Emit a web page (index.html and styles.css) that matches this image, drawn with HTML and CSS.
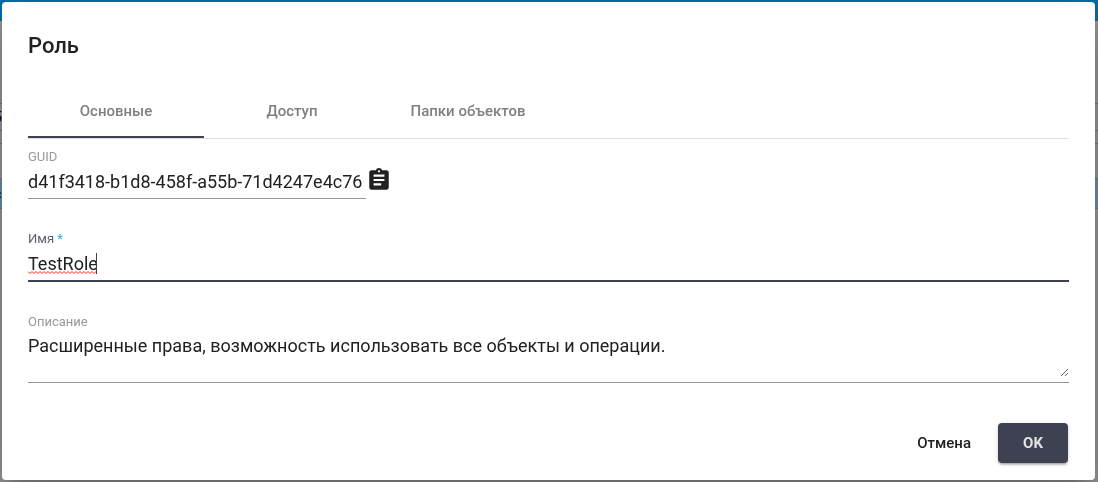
FILE: index.html
```html
<!DOCTYPE html>
<html lang="ru">
<head>
<meta charset="utf-8">
<meta name="viewport" content="width=device-width, initial-scale=1">
<title>Роль</title>
<link rel="stylesheet" href="styles.css">
</head>
<body>
<div class="page" aria-hidden="true">
  <div class="page-header"></div>
  <div class="page-filter"></div>
  <div class="page-search"><span class="page-text">5</span></div>
  <div class="page-gap"></div>
  <div class="page-row"></div>
  <div class="page-row page-row-selected"><span class="page-text">с</span></div>
  <div class="page-rest"></div>
</div>
<div class="overlay">
  <form class="dialog" role="dialog" aria-labelledby="dialog-title">
    <h1 class="title" id="dialog-title">Роль</h1>
    <div class="tabs" role="tablist">
      <button class="tab tab-active" type="button" role="tab" aria-selected="true">Основные</button>
      <button class="tab" type="button" role="tab" aria-selected="false">Доступ</button>
      <button class="tab" type="button" role="tab" aria-selected="false">Папки объектов</button>
    </div>
    <div class="fields">
      <div class="guid-row">
        <div class="field field-guid">
          <label class="label" for="guid">GUID</label>
          <input class="control" id="guid" type="text" value="d41f3418-b1d8-458f-a55b-71d4247e4c76" readonly>
        </div>
        <button class="copy" type="button" aria-label="Копировать">
          <svg class="copy-icon" viewBox="0 0 24 24"><path fill="currentColor" d="M19 3h-4.180C14.400 1.840 13.300 1 12 1c-1.300 0-2.400.840-2.820 2H5c-1.100 0-2 .900-2 2v14c0 1.100.900 2 2 2h14c1.100 0 2-.900 2-2V5c0-1.100-.900-2-2-2zm-7 0c.550 0 1 .450 1 1s-.450 1-1 1-1-.450-1-1 .450-1 1-1zm2 14H7v-2h7v2zm3-4H7v-2h10v2zm0-4H7V7h10v2z"/></svg>
        </button>
      </div>
      <div class="field field-focused">
        <label class="label" for="name">Имя <span class="required">*</span></label>
        <div class="control-wrap">
          <input class="control" id="name" type="text" value="TestRole" required spellcheck="false">
          <div class="typing" aria-hidden="true">
            <svg class="squiggle" viewBox="0 0 68 3"><path d="M0 .5 2 2.500 4 .5 6 2.500 8 .5 10 2.500 12 .5 14 2.500 16 .5 18 2.500 20 .5 22 2.500 24 .5 26 2.500 28 .5 30 2.500 32 .5 34 2.500 36 .5 38 2.500 40 .5 42 2.500 44 .5 46 2.500 48 .5 50 2.500 52 .5 54 2.500 56 .5 58 2.500 60 .5 62 2.500 64 .5 66 2.500 68 .5" fill="none" stroke="#f22" stroke-width="1"/></svg>
            <span class="caret"></span>
          </div>
        </div>
      </div>
      <div class="field">
        <label class="label" for="description">Описание</label>
        <textarea class="control control-area" id="description" spellcheck="false">Расширенные права, возможность использовать все объекты и операции.</textarea>
      </div>
    </div>
    <div class="actions">
      <button class="button" type="button">Отмена</button>
      <button class="button button-primary" type="submit">OK</button>
    </div>
  </form>
</div>
</body>
</html>
```
FILE: styles.css
```css
* {
  box-sizing: border-box;
}

html,
body {
  height: 100%;
}

body {
  margin: 0;
  overflow: hidden;
  background: #999;
  color: #212121;
  font-family: Roboto, "Noto Sans", sans-serif;
}

button,
input,
textarea {
  margin: 0;
  padding: 0;
  border: 0;
  border-radius: 0;
  outline: 0;
  background: none;
  color: inherit;
  font: inherit;
}

.page {
  display: flex;
  flex-direction: column;
  height: 100%;
  color: #000;
  font-size: 14px;
}

.page-header {
  height: 21px;
  background: #0071a8;
}

.page-filter {
  height: 83px;
  border-bottom: 1px solid #777;
}

.page-search {
  display: flex;
  align-items: center;
  height: 27px;
  border-bottom: 1px solid #777;
}

.page-gap {
  height: 13px;
  border-bottom: 1px solid #777;
}

.page-row {
  display: flex;
  align-items: center;
  height: 35px;
  border-bottom: 1px solid #777;
}

.page-row-selected {
  height: 30px;
  background: #6c91aa;
}

.page-text {
  margin-left: -6px;
}

.page-rest {
  flex: 1;
}

.overlay {
  position: fixed;
  inset: 0;
  padding: 2px 3px 2px 2px;
}

.dialog {
  display: flex;
  flex-direction: column;
  height: 100%;
  padding: 27px 26px 17px;
  border-radius: 4px;
  background: #fff;
  box-shadow: 0 12px 16px -8px rgba(0, 0, 0, 0.2), 0 26px 42px 3px rgba(0, 0, 0, 0.14), 0 10px 50px 9px rgba(0, 0, 0, 0.12);
}

.title {
  margin: 0 0 21px;
  font-size: 22px;
  font-weight: 500;
  line-height: 34px;
}

.tabs {
  display: flex;
  flex: none;
  height: 55px;
  border-bottom: 1px solid #e0e0e0;
}

.tab {
  min-width: 176px;
  padding: 2px 26px 0;
  border-bottom: 2px solid transparent;
  color: #808080;
  font-size: 15px;
  font-weight: 500;
}

.tab-active {
  border-bottom-color: #3e4152;
}

.fields {
  display: flex;
  flex-direction: column;
  gap: 31px;
  padding-top: 9px;
}

.guid-row {
  display: flex;
  align-items: flex-end;
}

.field {
  display: flex;
  flex: 1;
  flex-direction: column;
  border-bottom: 1px solid #949494;
}

.field-guid {
  flex: 0 0 338px;
}

.label {
  color: #999;
  font-size: 13px;
  line-height: 18px;
}

.field-focused {
  border-bottom: 2px solid #3e4152;
}

.field-focused .label {
  color: #5d6070;
}

.required {
  color: #29a9ea;
}

.control-wrap {
  display: flex;
  position: relative;
}

.control {
  width: 100%;
  height: 32px;
  padding-bottom: 1px;
  font-size: 18px;
  line-height: 22px;
}

.control-area {
  display: block;
  height: 42px;
  margin: 4px 0 5px;
  resize: vertical;
}

.typing {
  display: flex;
  position: absolute;
  top: 5px;
  left: 0;
  align-items: flex-end;
  height: 21px;
  pointer-events: none;
}

.squiggle {
  width: 68px;
  height: 3px;
}

.caret {
  width: 1px;
  height: 21px;
  background: #3e4152;
}

.copy {
  display: flex;
  padding-bottom: 6px;
  color: #212121;
}

.copy-icon {
  width: 26px;
  height: 26px;
}

.actions {
  display: flex;
  justify-content: flex-end;
  gap: 9px;
  margin-top: auto;
  padding-right: 1px;
}

.button {
  min-width: 70px;
  height: 40px;
  padding: 0 18px;
  border-radius: 4px;
  font-size: 15px;
  font-weight: 500;
}

.button-primary {
  background: #3e4152;
  color: #e1e1e4;
  font-weight: 700;
  box-shadow: 0 3px 2px -2px rgba(0, 0, 0, 0.2), 0 2px 2px rgba(0, 0, 0, 0.14), 0 1px 5px rgba(0, 0, 0, 0.12);
}
```
